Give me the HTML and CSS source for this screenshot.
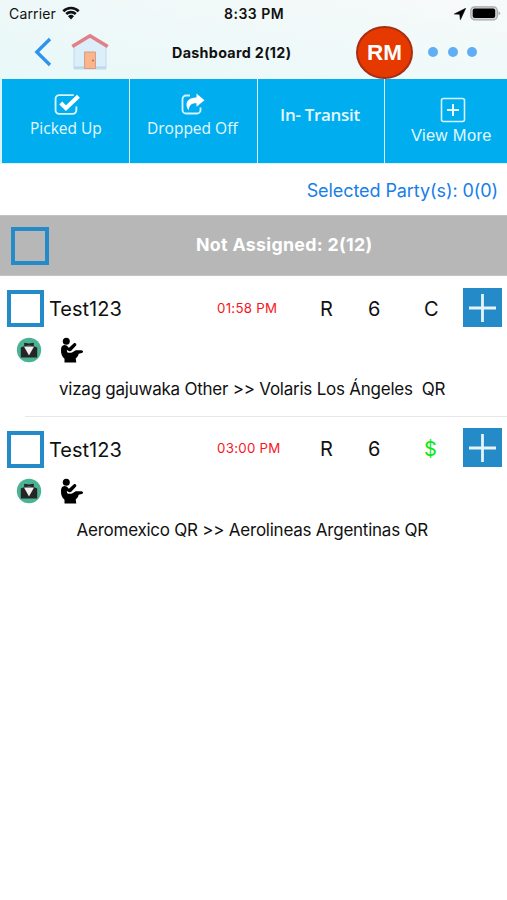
FILE: index.html
```html
<!DOCTYPE html>
<html lang="en">
<head>
<meta charset="utf-8">
<title>Dashboard</title>
<link rel="stylesheet" href="styles.css">
</head>
<body>
<svg width="0" height="0" class="defs">
  <defs>
    <symbol id="tuxedo" viewBox="0 0 26 26">
      <circle cx="13" cy="13" r="12.2" fill="#49b393"/>
      <path d="M4.800 10.500 8.500 9h9l3.700 1.500V20.500H4.800z" fill="#252525"/>
      <path d="M8 9.500h10L13 18.500z" fill="#f4eeee"/>
      <path d="M8.200 5.800 13 6.600l4.800-.8v3.400L13 8.500l-4.800.7z" fill="#252525"/>
    </symbol>
    <symbol id="sitting" viewBox="0 0 24 27">
      <circle cx="6.300" cy="4.300" r="3.500"/>
      <path d="M2.800 8.600C4.600 7.500 7 8.200 8 10l1 .8 4.600-4.400c1.500-1.200 3.500.4 2.500 2L11.500 13.600c-.9.900-2.100.900-3.100.2l-1.600-.8.400 2.300c2 .9 3.800.6 5.300-.1l3.200-1.900 5.700-.1c2 .1 2.200 2.300.4 2.800l-3.100.8c-.4 1.900-1.600 3.600-3 4.600l.6 4.200H4.500v-3.800C1.800 19.500.9 16.500 1 13c.1-2 .5-3.500 1.800-4.400z"/>
    </symbol>
    <symbol id="plus" viewBox="0 0 39 39">
      <path d="M19.500 6v28M6 20h27" stroke="#e3f4fc" stroke-width="2.800" fill="none"/>
    </symbol>
  </defs>
</svg>
<header class="top">
  <div class="status">
    <span class="carrier">Carrier</span>
    <svg class="wifi" viewBox="0 0 18 14"><path d="M1.300 5.200a11 11 0 0 1 15.400 0M4.200 8a7 7 0 0 1 9.600 0" fill="none" stroke="#111" stroke-width="2.600"/><path d="M6 10.200a4.300 4.300 0 0 1 6 0l-3 3.200z" fill="#111"/></svg>
    <span class="clock">8:33 PM</span>
    <svg class="locate" viewBox="0 0 12 12"><path d="M.3 6 11.700.3 6.400 11.700 5.700 6.300z" stroke="#000" stroke-width=".6"/></svg>
    <svg class="battery" viewBox="0 0 31 15"><rect x=".8" y=".8" width="26.500" height="13" rx="3.800" fill="#d5d7d7" stroke="#a5a8a8" stroke-width="1.200"/><rect x="2.700" y="2.600" width="22.500" height="9.400" rx="2"/><path d="M28.500 5.200q3.300 2.100 0 4.300z" fill="#a5a8a8"/></svg>
  </div>
  <nav class="nav">
    <svg class="back" viewBox="0 0 18 30"><path d="M16 2 2.800 15 16 28" fill="none" stroke="#2d93ee" stroke-width="3.300"/></svg>
    <svg class="home" viewBox="0 0 38 38"><path d="M3 14 19 3l16 11v22H3z" fill="#dceefa"/><path d="M3 14v22h32V14" fill="none" stroke="#bcdced" stroke-width="1"/><path d="M3 34.500h32" stroke="#bad7e8" stroke-width="2"/><path d="M1.300 13.500 19 2.800l17.700 10.700" fill="none" stroke="#e08088" stroke-width="3.600"/><path d="M13.500 19h11v16.500h-11z" fill="#f9b58c" stroke="#d79c83"/><circle cx="22" cy="27.500" r="1" fill="#b56c50"/></svg>
    <h1 class="title">Dashboard 2(12)</h1>
    <div class="avatar">RM</div>
    <div class="dots"><i></i><i></i><i></i></div>
  </nav>
</header>
<div class="tabs">
  <div class="tab">
    <svg class="picked-icon" viewBox="0 0 25 22"><path d="M19 2H5A3.500 3.500 0 0 0 1.500 5.500v11A3.500 3.500 0 0 0 5 20h13a3.500 3.500 0 0 0 3.500-3.500V13" fill="none" stroke="#d8f5ff" stroke-width="1.800"/><path d="m6.500 9.500 5 5L23.500 3" fill="none" stroke="#fff" stroke-width="4"/></svg>
    <span class="picked">Picked Up</span>
  </div>
  <div class="tab">
    <svg class="dropped-icon" viewBox="0 0 24 22"><path d="M9 2H5A3.500 3.500 0 0 0 1.500 5.500v11A3.500 3.500 0 0 0 5 20h11a3.500 3.500 0 0 0 3.500-3.500V14" fill="none" stroke="#d8f5ff" stroke-width="1.800"/><path d="M15.500 0 23.500 6.800l-8 6.500v-3.600c-5 0-7.300 1.800-7.900 7.300C2.700 9.700 6.700 4 15.500 4z" fill="#fff"/></svg>
    <span class="dropped">Dropped Off</span>
  </div>
  <div class="tab"><span class="transit">In- Transit</span></div>
  <div class="tab">
    <svg class="more-icon" viewBox="0 0 26 26"><rect x="1.500" y="1.500" width="23" height="23" rx="2" fill="none" stroke="#d8f5ff" stroke-width="1.600"/><path d="M13 7v12M7 13h12" stroke="#e8f9ff" stroke-width="2"/></svg>
    <span class="more">View More</span>
  </div>
</div>
<p class="selected"><span>Selected Party(s): 0(0)</span></p>
<section class="group">
  <span class="check"></span>
  <h2 class="group-title">Not Assigned: 2(12)</h2>
</section>
<main>
  <article class="party">
    <div class="line">
      <span class="check white"></span>
      <span class="name">Test123</span>
      <span class="time">01:58 PM</span>
      <span class="kind">R</span>
      <span class="count">6</span>
      <span class="pay">C</span>
      <svg class="add"><use href="#plus"/></svg>
    </div>
    <div class="icons"><svg class="tux"><use href="#tuxedo"/></svg><svg class="sit"><use href="#sitting"/></svg></div>
    <p class="route"><span>vizag gajuwaka Other &gt;&gt; Volaris Los Ángeles&nbsp; QR</span></p>
  </article>
  <article class="party">
    <div class="line">
      <span class="check white"></span>
      <span class="name">Test123</span>
      <span class="time">03:00 PM</span>
      <span class="kind">R</span>
      <span class="count">6</span>
      <span class="pay cash">$</span>
      <svg class="add"><use href="#plus"/></svg>
    </div>
    <div class="icons"><svg class="tux"><use href="#tuxedo"/></svg><svg class="sit"><use href="#sitting"/></svg></div>
    <p class="route"><span>Aeromexico QR &gt;&gt; Aerolineas Argentinas QR</span></p>
  </article>
</main>
</body>
</html>
```
FILE: styles.css
```css
* { box-sizing: border-box; }
body {
  margin: 0;
  width: 507px;
  height: 900px;
  overflow: hidden;
  background: #fff;
  color: #111;
  font-family: Inter, "Liberation Sans", sans-serif;
}
h1, h2, p { margin: 0; }
svg { display: block; flex: none; }
span { white-space: nowrap; }
.defs { position: absolute; }

.top {
  height: 79px;
  background: linear-gradient(90deg, rgba(232, 248, 248, .5), rgba(250, 252, 252, .4)), linear-gradient(#f5f8f8, #e9f8f9);
}
.status { display: flex; height: 27px; padding-left: 9px; }
.carrier { width: 53px; font-size: 14px; line-height: 28px; letter-spacing: .15px; }
.wifi { width: 18px; height: 14px; margin-top: 6px; }
.clock { width: 64px; margin-left: 144px; font-size: 14px; font-weight: 600; line-height: 28px; letter-spacing: .5px; }
.locate { width: 12px; height: 12px; margin: 8px 0 0 166px; }
.battery { width: 31px; height: 15px; margin: 6px 0 0 4px; }

.nav { display: flex; height: 52px; padding-left: 34px; }
.back { width: 18px; height: 30px; margin-top: 10px; }
.home { width: 38px; height: 38px; margin: 6px 0 0 19px; }
.title { width: 124px; margin-left: 63px; font-size: 14.300px; font-weight: 700; line-height: 51px; letter-spacing: .32px; white-space: nowrap; }
.avatar {
  z-index: 1;
  width: 57px;
  height: 53px;
  margin-left: 60px;
  margin-top: -1px;
  border: 2px solid #a82d13;
  border-radius: 50%;
  background: #e63900;
  color: #fff;
  font: bold 22.500px/49px "Liberation Sans", sans-serif;
  text-align: center;
}
.dots { display: flex; gap: 9.500px; margin: 20px 0 0 15px; }
.dots i { width: 10px; height: 10px; border-radius: 50%; background: #60aef5; }

.tabs {
  display: grid;
  grid-template-columns: 127px 127px 126px 123px;
  column-gap: 1px;
  height: 85px;
  padding: 0 0 1px 2px;
  background: #d9f4fc;
}
.tab { display: flex; flex-direction: column; align-items: flex-start; background: #00adef; color: #e4f8ff; }
.picked-icon { width: 26px; height: 23px; margin: 14px 0 0 52px; }
.dropped-icon { width: 24px; height: 23px; margin: 14px 0 0 51px; }
.more-icon { width: 26px; height: 26px; margin: 18px 0 0 55px; }
.picked, .dropped, .transit { font-family: "Open Sans", "Noto Sans", sans-serif; font-size: 15.500px; font-weight: 500; line-height: 22px; }
.picked { margin: 1px 0 0 28px; }
.dropped { margin: 1px 0 0 17px; }
.transit { margin: 25px 0 0 22px; font-size: 17px; font-weight: 600; letter-spacing: -.3px; }
.more { margin: 2px 0 0 26px; font-family: "Liberation Sans", sans-serif; font-size: 16.500px; line-height: 20px; letter-spacing: .35px; }

.selected { height: 51px; padding: 0 9px 0 0; color: #187ee8; font-size: 18px; line-height: 53px; text-align: right; letter-spacing: -.08px; }
.group { display: flex; height: 61px; padding-left: 11px; background: #b7b7b7; border-top: 1px solid #c2c2c2; border-bottom: 1px solid #c4c4c4; }
.check { flex: none; width: 38px; height: 38px; border: 4px solid #258bc8; }
.group .check { margin-top: 11px; }
.group-title { margin-left: 147px; color: #fff; font-size: 17.800px; font-weight: 700; line-height: 57px; letter-spacing: .3px; white-space: nowrap; }

.party { height: 140px; padding-top: 12px; }
.line { display: flex; height: 40px; padding-left: 7px; line-height: 43px; }
.white { width: 37px; height: 37px; margin-top: 2px; background: #fff; }
.name { width: 168px; margin-left: 5px; font-size: 20px; }
.time { width: 103px; font-size: 13.300px; line-height: 40px; letter-spacing: .27px; color: #f8161d; }
.kind { width: 48px; font-size: 20px; line-height: 42px; }
.count { width: 56px; font-size: 20px; line-height: 42px; }
.pay { width: 39px; font-size: 20px; line-height: 42px; }
.cash { color: #0be916; }
.add { width: 39px; height: 39px; background: #258bc8; }
.icons { display: flex; height: 28px; padding: 9px 0 0 16px; }
.tux { width: 26px; height: 26px; }
.sit { width: 24px; height: 27px; margin-left: 18px; }
.route { height: 60px; padding-left: 59px; font-size: 17px; line-height: 66px; letter-spacing: -.24px; font-feature-settings: "calt" 0; }
.party + .party { background: linear-gradient(#e7e7e7, #e7e7e7) 25px 0 / 482px 1px no-repeat; }
.party + .party .line { height: 41px; line-height: 45px; }
.party + .party .white { margin-top: 3px; }
.party + .party .time { line-height: 41px; }
.party + .party .route { padding-left: 76.500px; }
```
